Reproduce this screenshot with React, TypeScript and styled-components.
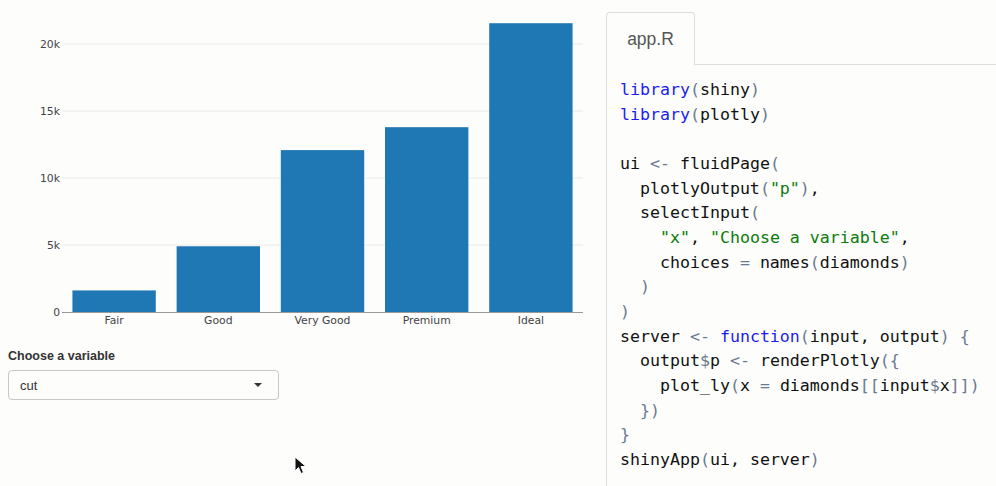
import React from "react";
import styled, { createGlobalStyle } from "styled-components";

const GlobalStyle = createGlobalStyle`
  html, body {
    margin: 0;
    padding: 0;
    background: #fdfdfc;
  }
  body {
    width: 996px;
    height: 486px;
    overflow: hidden;
  }
`;

const Page = styled.div`
  display: grid;
  grid-template-columns: 606px 1fr;
  height: 486px;
  position: relative;
`;

const LeftCol = styled.div`
  display: flex;
  flex-direction: column;
  padding-left: 8px;
`;

const ChartSvg = styled.svg`
  display: block;
`;

const FormGroup = styled.div`
  display: flex;
  flex-direction: column;
  margin-top: 19px;
  width: 271px;
`;

const Label = styled.label`
  font-family: "Liberation Sans", Arial, sans-serif;
  font-weight: bold;
  font-size: 12.5px;
  color: #333;
  margin-bottom: 7px;
`;

const SelectBox = styled.div`
  display: flex;
  align-items: center;
  justify-content: space-between;
  height: 28px;
  border: 1px solid #c8c8c8;
  border-radius: 4px;
  padding: 0 16px 0 11px;
  font-family: "Liberation Sans", Arial, sans-serif;
  font-size: 13px;
  color: #333;
  background: #fdfdfc;
`;

const Caret = styled.span`
  width: 0;
  height: 0;
  border-left: 4px solid transparent;
  border-right: 4px solid transparent;
  border-top: 4px solid #333;
`;

const RightCol = styled.div`
  display: flex;
  flex-direction: column;
  padding-top: 12px;
`;

const TabBar = styled.div`
  display: flex;
  border-bottom: 1px solid #dedede;
  height: 53px;
  box-sizing: border-box;
`;

const Tab = styled.div`
  display: flex;
  align-items: center;
  justify-content: center;
  width: 89px;
  height: 54px;
  box-sizing: border-box;
  border: 1px solid #dedede;
  border-bottom-color: #fdfdfc;
  border-radius: 4px 4px 0 0;
  font-family: "Liberation Sans", Arial, sans-serif;
  font-size: 17.5px;
  color: #555;
  background: #fdfdfc;
`;

const CodePane = styled.pre`
  flex: 1;
  margin: 0;
  border-left: 1px solid #dedede;
  padding: 13px 0 0 13px;
  font-family: "DejaVu Sans Mono", monospace;
  font-size: 16.6px;
  line-height: 24.67px;
  color: #111;
`;

const Tok = styled.span<{ $kind: string }>`
  color: ${(p) =>
    p.$kind === "kw"
      ? "#1c1cf0"
      : p.$kind === "str"
      ? "#0b7a0b"
      : p.$kind === "op"
      ? "#6b7a8f"
      : "#111"};
`;

const Cursor = styled.svg`
  position: absolute;
  left: 294px;
  top: 456px;
`;

type T = [string, string];

const code: T[][] = [
  [["library", "kw"], ["(", "op"], ["shiny", "id"], [")", "op"]],
  [["library", "kw"], ["(", "op"], ["plotly", "id"], [")", "op"]],
  [],
  [["ui ", "id"], ["<-", "op"], [" fluidPage", "id"], ["(", "op"]],
  [["  plotlyOutput", "id"], ["(", "op"], ['"p"', "str"], [")", "op"], [",", "id"]],
  [["  selectInput", "id"], ["(", "op"]],
  [["    ", "id"], ['"x"', "str"], [", ", "id"], ['"Choose a variable"', "str"], [",", "id"]],
  [["    choices ", "id"], ["=", "op"], [" names", "id"], ["(", "op"], ["diamonds", "id"], [")", "op"]],
  [["  ", "id"], [")", "op"]],
  [[")", "op"]],
  [["server ", "id"], ["<-", "op"], [" ", "id"], ["function", "kw"], ["(", "op"], ["input, output", "id"], [")", "op"], [" ", "id"], ["{", "op"]],
  [["  output", "id"], ["$", "op"], ["p ", "id"], ["<-", "op"], [" renderPlotly", "id"], ["({", "op"]],
  [["    plot_ly", "id"], ["(", "op"], ["x ", "id"], ["=", "op"], [" diamonds", "id"], ["[[", "op"], ["input", "id"], ["$", "op"], ["x", "id"], ["]])", "op"]],
  [["  ", "id"], ["})", "op"]],
  [["}", "op"]],
  [["shinyApp", "id"], ["(", "op"], ["ui, server", "id"], [")", "op"]],
];

const bars = [
  { label: "Fair", value: 1610 },
  { label: "Good", value: 4906 },
  { label: "Very Good", value: 12082 },
  { label: "Premium", value: 13791 },
  { label: "Ideal", value: 21551 },
];

// plot area in svg coords (svg starts at x=8)
const X0 = 54;
const X1 = 575;
const Y0 = 312;
const PER = 67 / 5000;

const Chart = () => {
  const step = (X1 - X0) / bars.length;
  const bw = step * 0.8;
  return (
    <ChartSvg width={590} height={330}>
      {[5000, 10000, 15000, 20000].map((v) => (
        <line key={v} x1={X0} x2={X1} y1={Y0 - v * PER} y2={Y0 - v * PER} stroke="#eaeaea" strokeWidth={1} />
      ))}
      {[0, 5000, 10000, 15000, 20000].map((v) => (
        <text
          key={v}
          x={X0 - 2}
          y={Y0 - v * PER + 4}
          textAnchor="end"
          fontFamily="DejaVu Sans, Verdana, sans-serif"
          fontSize={10.8}
          fill="#444"
        >
          {v === 0 ? "0" : `${v / 1000}k`}
        </text>
      ))}
      {bars.map((b, i) => {
        const x = X0 + i * step + (step - bw) / 2;
        const h = b.value * PER;
        return (
          <g key={b.label}>
            <rect x={x} y={Y0 - h} width={bw} height={h} fill="#1f77b4" />
            <text
              x={x + bw / 2}
              y={Y0 + 12}
              textAnchor="middle"
              fontFamily="DejaVu Sans, Verdana, sans-serif"
              fontSize={10.8}
              fill="#444"
            >
              {b.label}
            </text>
          </g>
        );
      })}
      <line x1={X0} x2={X1} y1={Y0 + 0.5} y2={Y0 + 0.5} stroke="#9a9a9a" strokeWidth={1} />
    </ChartSvg>
  );
};

export default function App() {
  return (
    <>
      <GlobalStyle />
      <Page>
        <LeftCol>
          <Chart />
          <FormGroup>
            <Label>Choose a variable</Label>
            <SelectBox>
              <span>cut</span>
              <Caret />
            </SelectBox>
          </FormGroup>
        </LeftCol>
        <RightCol>
          <TabBar>
            <Tab>app.R</Tab>
          </TabBar>
          <CodePane>
            {code.map((line, i) => (
              <div key={i}>
                {line.length === 0
                  ? "\u00a0"
                  : line.map(([t, k], j) => (
                      <Tok key={j} $kind={k}>
                        {t}
                      </Tok>
                    ))}
              </div>
            ))}
          </CodePane>
        </RightCol>
        <Cursor width={14} height={20} viewBox="0 0 14 20">
          <path d="M1 1 L1 15 L4.5 11.5 L7 17.5 L9.5 16.5 L7 10.5 L12 10.5 Z" fill="#111" stroke="#fff" strokeWidth={1} />
        </Cursor>
      </Page>
    </>
  );
}
